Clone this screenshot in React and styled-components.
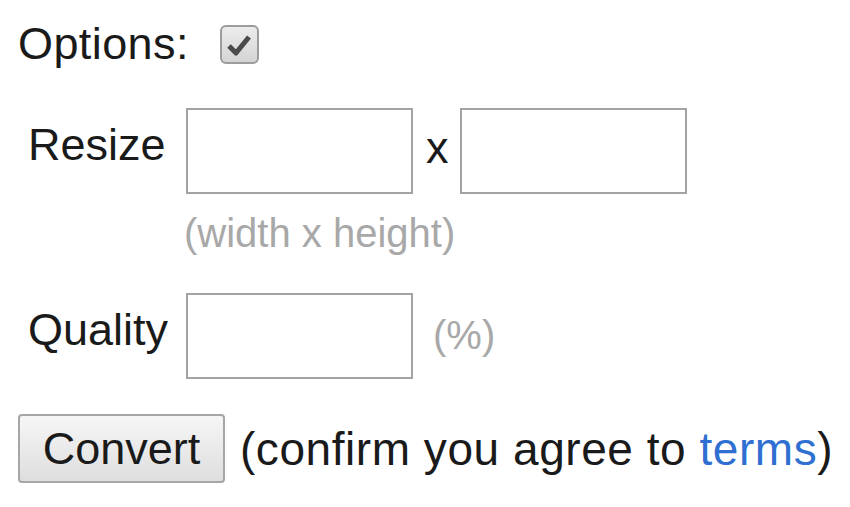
import styled, { createGlobalStyle } from 'styled-components'

const GlobalStyle = createGlobalStyle`
    html, body {
        margin: 0;
        padding: 0;
        background: #fff;
    }
    body {
        font-family: "Liberation Sans", Arial, sans-serif;
        color: #1a1a1a;
    }
`

const StyledPage = styled.div`
    display: flex;
    flex-direction: column;
    padding: 25px 0 0 18px;
    font-size: 45px;
    line-height: 52px;
`

const StyledOptionsRow = styled.div`
    display: flex;
    align-items: center;
    gap: 31px;
    height: 38px;
    letter-spacing: 0.4px;
`

const StyledCheckbox = styled.span`
    display: flex;
    align-items: center;
    justify-content: center;
    width: 35px;
    height: 35px;
    border: 2px solid #9c9c9c;
    border-radius: 6px;
    background: linear-gradient(#ececec, #d4d4d4);
    margin-top: 1px;
`

const StyledFields = styled.div`
    display: flex;
    flex-direction: column;
    margin-top: 45px;
`

const StyledRow = styled.div`
    display: flex;
    align-items: center;
    margin-top: ${props => props.$top || 0}px;
`

const StyledLabel = styled.label`
    width: 158px;
    padding-left: 10px;
    margin-top: -12px;
`

const StyledInput = styled.input`
    box-sizing: border-box;
    width: 227px;
    height: 86px;
    border: 2px solid #a3a3a3;
    background: #fff;
    margin: 0;
    font-size: 40px;
`

const StyledTimes = styled.span`
    margin: -6px 11px 0 13px;
`

const StyledHint = styled.span`
    color: #a8a8a8;
    font-size: 40px;
    line-height: 46px;
    margin-left: ${props => props.$left || 0}px;
    margin-top: ${props => props.$top || 0}px;
`

const StyledSubmitRow = styled.div`
    display: flex;
    align-items: center;
    gap: 15px;
    margin-top: 35px;
`

const StyledButton = styled.button`
    box-sizing: border-box;
    width: 207px;
    height: 69px;
    padding: 0;
    font-family: "Liberation Sans", Arial, sans-serif;
    font-size: 45px;
    color: #1a1a1a;
    border: 2px solid #a6a6a6;
    border-radius: 4px;
    background: linear-gradient(#f6f6f6, #dedede);
`

const StyledNote = styled.span`
    font-size: 46px;
    letter-spacing: 0.55px;
`

const StyledTerms = styled.a`
    color: #2f6fd1;
    text-decoration: none;
`

export default function App() {
    return (
        <>
            <GlobalStyle />
            <StyledPage>
                <StyledOptionsRow>
                    <span>Options:</span>
                    <StyledCheckbox>
                        <svg width="26" height="24" viewBox="0 0 26 24">
                            <path d="M3 13 L10 20 L23 4" fill="none" stroke="#4a4a4a" strokeWidth="5" strokeLinejoin="round" />
                        </svg>
                    </StyledCheckbox>
                </StyledOptionsRow>
                <StyledFields>
                    <StyledRow>
                        <StyledLabel>Resize</StyledLabel>
                        <StyledInput />
                        <StyledTimes>x</StyledTimes>
                        <StyledInput />
                    </StyledRow>
                    <StyledHint $left={166} $top={16}>(width x height)</StyledHint>
                    <StyledRow $top={37}>
                        <StyledLabel>Quality</StyledLabel>
                        <StyledInput />
                        <StyledHint $left={20} $top={-2}>(%)</StyledHint>
                    </StyledRow>
                </StyledFields>
                <StyledSubmitRow>
                    <StyledButton>Convert</StyledButton>
                    <StyledNote>(confirm you agree to <StyledTerms href="#">terms</StyledTerms>)</StyledNote>
                </StyledSubmitRow>
            </StyledPage>
        </>
    )
}
